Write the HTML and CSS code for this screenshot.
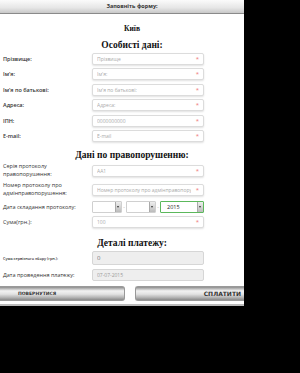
FILE: index.html
```html
<!DOCTYPE html>
<html lang="uk">
  <head>
    <meta charset="UTF-8" />
    <meta name="viewport" content="width=device-width, initial-scale=1.0" />
    <title>Заповніть форму</title>
    <link rel="stylesheet" href="styles.css">
  </head>
  <body>
    <div class="page">
      <div class="topbar">Заповніть форму:</div>
      <form class="pay-form">
        <div class="city">Київ</div>

        <h2 class="first">Особисті дані:</h2>
        <div class="row">
          <label class="strong">Прізвище:</label>
          <div class="field"><input type="text" placeholder="Прізвище" /><span class="req">*</span></div>
        </div>
        <div class="row">
          <label class="strong">Ім'я:</label>
          <div class="field"><input type="text" placeholder="Ім'я:" /><span class="req">*</span></div>
        </div>
        <div class="row">
          <label class="strong">Ім'я по батькові:</label>
          <div class="field"><input type="text" placeholder="Ім'я по батькові:" /><span class="req">*</span></div>
        </div>
        <div class="row">
          <label class="strong">Адреса:</label>
          <div class="field"><input type="text" placeholder="Адреса:" /><span class="req">*</span></div>
        </div>
        <div class="row">
          <label class="strong">ІПН:</label>
          <div class="field"><input type="text" placeholder="0000000000" /><span class="req">*</span></div>
        </div>
        <div class="row">
          <label class="strong">E-mail:</label>
          <div class="field"><input type="text" placeholder="E-mail" /><span class="req">*</span></div>
        </div>

        <h2>Дані по правопорушенню:</h2>
        <div class="row">
          <label class="two-line">Серія протоколу правопорушення:</label>
          <div class="field"><input type="text" placeholder="AA1" /><span class="req">*</span></div>
        </div>
        <div class="row">
          <label class="two-line">Номер протоколу про адмінправопорушення:</label>
          <div class="field"><input type="text" placeholder="Номер протоколу про адмінправопорушення" /><span class="req">*</span></div>
        </div>
        <div class="row">
          <label>Дата складання протоколу:</label>
          <div class="date-group">
            <div class="select small"><span></span><i class="arrow"></i></div>
            <span class="dash">-</span>
            <div class="select small"><span></span><i class="arrow"></i></div>
            <span class="dash">-</span>
            <div class="select year"><span>2015</span><i class="arrow"></i></div>
          </div>
        </div>
        <div class="row">
          <label>Сума(грн.):</label>
          <div class="field"><input type="text" placeholder="100" /><span class="req">*</span></div>
        </div>

        <h2 class="payment">Деталі платежу:</h2>
        <div class="row">
          <label class="tiny">Сума сервісного збору (грн.):</label>
          <div class="field readonly tall"><input type="text" value="0" readonly /></div>
        </div>
        <div class="row">
          <label>Дата проведення платежу:</label>
          <div class="field readonly"><input type="text" value="07-07-2015" readonly /></div>
        </div>

        <div class="buttons">
          <button type="button" class="btn back">ПОВЕРНУТИСЯ</button>
          <button type="submit" class="btn pay">СПЛАТИТИ</button>
        </div>
      </form>
    </div>
  </body>
</html>
```

FILE: styles.css
```css
body {
  margin: 0;
  background: #000;
  font-family: "Open Sans", "DejaVu Sans", sans-serif;
}

.page {
  width: 244px;
  background: #fff;
  border-bottom: 2px solid #bbb;
  overflow: hidden;
}

.topbar {
  height: 13px;
  line-height: 13px;
  text-align: center;
  font-size: 5.5px;
  font-weight: bold;
  color: #333;
  background: linear-gradient(#fbfbfb, #e6e6e6 60%, #c8c8c8);
  border-bottom: 1px solid #8a8a8a;
  padding-left: 20px;
}

.pay-form {
  padding: 0 0 3px 0;
}

.city {
  text-align: center;
  font-family: "Liberation Serif", "Times New Roman", serif;
  font-weight: bold;
  font-size: 7.5px;
  line-height: 8px;
  margin: 11px 0 7px 20px;
  color: #111;
}

.pay-form h2 {
  text-align: center;
  font-family: "Liberation Serif", "Times New Roman", serif;
  font-weight: bold;
  font-size: 9.5px;
  margin: 8px 0 3px 20px;
  color: #111;
  line-height: 10px;
}

.pay-form h2.first {
  margin-top: 0;
}

.pay-form h2.payment {
  margin-top: 10px;
}

.row {
  display: flex;
  align-items: center;
  min-height: 12px;
  margin-bottom: 3.4px;
}

.row label {
  width: 92px;
  padding-left: 3px;
  box-sizing: border-box;
  font-size: 5.5px;
  color: #333;
}

.row label.strong {
  font-weight: 600;
}

.row label.two-line {
  line-height: 7.8px;
  padding-right: 22px;
}

.row label.tiny {
  font-size: 3.8px;
  font-weight: 600;
}

.field {
  position: relative;
  width: 112px;
  height: 12px;
}

.field input {
  display: block;
  width: 100%;
  height: 100%;
  box-sizing: border-box;
  border: 1px solid #dcdcdc;
  border-radius: 2px;
  box-shadow: 0 1px 2px rgba(0, 0, 0, 0.12);
  padding: 0 12px 0 4px;
  font-family: "Open Sans", "DejaVu Sans", sans-serif;
  font-size: 5px;
  color: #999;
  background: #fff;
  outline: none;
}

.field input::placeholder {
  color: #aaa;
}

.field .req {
  position: absolute;
  right: 5px;
  top: 2px;
  font-size: 6px;
  line-height: 8px;
  color: #e77;
}

.field.readonly input {
  background: #eee;
  border-color: #d6d6d6;
  box-shadow: none;
}

.field.tall {
  height: 14px;
}

.field.tall input {
  font-size: 6px;
  color: #777;
}

.date-group {
  display: flex;
  align-items: center;
  width: 112px;
}

.dash {
  width: 4px;
  text-align: center;
  font-size: 5px;
  color: #aaa;
}

.select {
  display: flex;
  align-items: stretch;
  height: 12px;
  box-sizing: border-box;
  border: 1px solid #d0d0d0;
  border-radius: 1px;
  background: #fff;
}

.select.small {
  width: 30px;
}

.select.year {
  width: 44px;
  border-color: #5cb85c;
}

.select span {
  flex: 1;
  font-size: 5.5px;
  line-height: 10px;
  padding-left: 6px;
  color: #222;
}

.select .arrow {
  width: 5px;
  background: linear-gradient(#eee, #bbb);
  border-left: 1px solid #aaa;
  position: relative;
}

.select .arrow::after {
  content: "";
  position: absolute;
  left: 1px;
  top: 4px;
  border-left: 1.5px solid transparent;
  border-right: 1.5px solid transparent;
  border-top: 2px solid #333;
}

.buttons {
  display: flex;
  justify-content: space-between;
  margin-top: 5px;
}

.btn {
  height: 15px;
  border: 1px solid #999;
  border-radius: 3px;
  background: linear-gradient(#8c8c8c, #f2f2f2 30%, #e2e2e2 55%, #b5b5b5 80%, #8a8a8a);
  font-family: "DejaVu Sans", Verdana, sans-serif;
  font-weight: bold;
  color: #333;
  padding: 0;
}

.btn.back {
  width: 125px;
  font-size: 4.5px;
  text-align: left;
  padding-left: 18px;
  border-left: none;
  border-radius: 0 3px 3px 0;
}

.btn.pay {
  width: 109px;
  font-size: 6px;
  text-align: right;
  padding-right: 3px;
  border-right: none;
  border-radius: 3px 0 0 3px;
}
```
